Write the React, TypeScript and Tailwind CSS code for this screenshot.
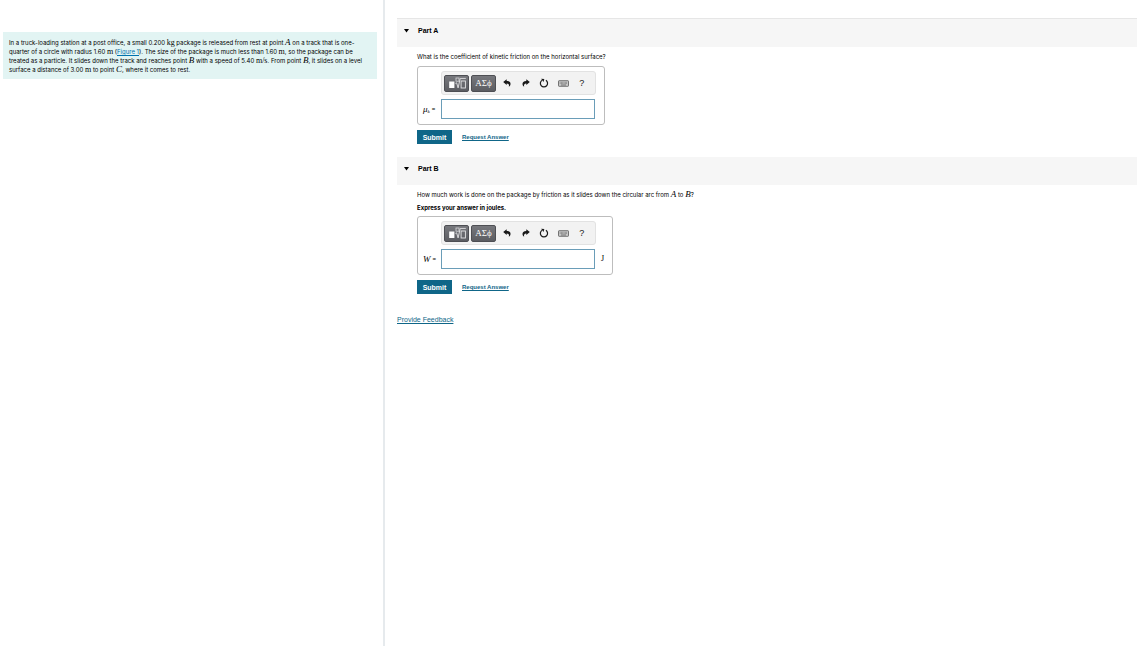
import { useState } from "react";
import type { ReactNode } from "react";

const iconButton = "flex-1 h-full flex items-center justify-center cursor-pointer";
const darkButton =
  "w-[25px] h-[17px] flex items-center justify-center rounded-xs border border-[#4e4f54] bg-linear-to-b from-[#77787d] to-[#5c5d62] text-white cursor-pointer";
const bodyText = "font-[Inter,sans-serif] text-[6px] leading-[9px]";

function MathVar({ children }: { children: ReactNode }) {
  return (
    <i className="font-['Liberation_Serif',serif] text-[9px] leading-none">
      {children}
    </i>
  );
}

function Unit({ children }: { children: ReactNode }) {
  return (
    <span className="font-['Liberation_Serif',serif] text-[8px] leading-none">
      {children}
    </span>
  );
}

function TemplatesIcon() {
  return (
    <svg width="19" height="13" viewBox="0 0 19 13" fill="none">
      <rect x="2.2" y="4.5" width="5.2" height="6.5" fill="white" />
      <rect x="9" y="1" width="3" height="3.2" stroke="#d8d8da" strokeWidth="0.8" />
      <path d="M8.4 6.4L9.6 5.8L11.1 10.9L13.2 1.4H18.8" stroke="#e4e4e6" strokeWidth="0.9" />
      <rect x="14.1" y="4" width="4.3" height="7" stroke="#e4e4e6" strokeWidth="0.9" />
    </svg>
  );
}

function UndoIcon({ flipped = false }: { flipped?: boolean }) {
  return (
    <svg
      width="8"
      height="8"
      viewBox="0 0 8 8"
      className={flipped ? "-scale-x-100" : ""}
    >
      <path
        d="M0.2 3.1L3.7 0.2V1.9C6.4 1.9 7.7 3.4 7.5 5.2C7.4 6.3 6.8 7.1 5.8 7.8C6.4 5.8 5.7 4.6 3.7 4.5V6.1Z"
        fill="#1a1a1a"
      />
    </svg>
  );
}

function ResetIcon() {
  return (
    <svg width="10" height="10" viewBox="0 0 10 10" fill="none">
      <path
        d="M6.9 2.3A3.6 3.6 0 1 1 3.2 2.2"
        stroke="#1a1a1a"
        strokeWidth="1.2"
      />
      <path d="M2.1 0.8L5.3 0.9L4.6 4Z" fill="#1a1a1a" />
    </svg>
  );
}

function KeyboardIcon() {
  return (
    <svg width="11" height="7" viewBox="0 0 11 7" fill="none">
      <rect x="0.5" y="0.7" width="10" height="5.6" rx="0.6" fill="#cccccc" stroke="#555555" strokeWidth="0.8" />
      <path d="M1.7 2.3H9.3M1.7 3.6H9.3" stroke="#666666" strokeWidth="0.7" strokeDasharray="0.9 0.4" />
      <path d="M3 5H8" stroke="#555555" strokeWidth="0.7" />
    </svg>
  );
}

function Toolbar() {
  return (
    <div className="h-6 w-[155px] flex items-center gap-0.5 pl-0.5 pr-1 rounded-[3px] border border-[#e2e2e2] bg-[#f2f2f2]">
      <button type="button" aria-label="Templates" className={darkButton}>
        <TemplatesIcon />
      </button>
      <button
        type="button"
        aria-label="Symbols"
        className={`${darkButton} font-['Liberation_Serif',serif] text-[9px] leading-none`}
      >
        ΑΣϕ
      </button>
      <div className="flex flex-1 h-full">
        <button type="button" aria-label="Undo" className={iconButton}>
          <UndoIcon />
        </button>
        <button type="button" aria-label="Redo" className={iconButton}>
          <UndoIcon flipped />
        </button>
        <button type="button" aria-label="Reset" className={iconButton}>
          <ResetIcon />
        </button>
        <button type="button" aria-label="Keyboard shortcuts" className={iconButton}>
          <KeyboardIcon />
        </button>
        <button
          type="button"
          aria-label="Help"
          className={`${iconButton} text-[9px] text-[#1a1a1a]`}
        >
          ?
        </button>
      </div>
    </div>
  );
}

type AnswerProps = {
  id: string;
  label: ReactNode;
  unit?: string;
};

function AnswerForm({ id, label, unit }: AnswerProps) {
  const [answer, setAnswer] = useState("");

  return (
    <form onSubmit={(e) => e.preventDefault()}>
      <div className="w-fit flex flex-col gap-1 border border-[#bdbdbd] rounded-[3px] pt-1 pb-[5px] pl-[5px] pr-2">
        <div className="pl-[18px]">
          <Toolbar />
        </div>
        <div className="flex items-center">
          <label
            htmlFor={id}
            className="w-[18px] flex items-center gap-0.5 whitespace-nowrap"
          >
            {label}
            <span>=</span>
          </label>
          <input
            id={id}
            type="text"
            value={answer}
            onChange={(e) => setAnswer(e.target.value)}
            className="w-[154px] h-5 border border-[#6a9db8] bg-white px-1 text-[8px] outline-none"
          />
          {unit && (
            <span className="pl-1.5 font-['Liberation_Serif',serif] text-[8px]">
              {unit}
            </span>
          )}
        </div>
      </div>
      <div className="flex items-center gap-2.5 mt-[5px]">
        <button
          type="submit"
          className="w-[35px] h-3.5 bg-[#0f6688] text-white text-[7px] leading-none font-bold cursor-pointer"
        >
          Submit
        </button>
        <a href="#" className="font-bold underline text-[#0f6688]">
          Request Answer
        </a>
      </div>
    </form>
  );
}

type PartProps = {
  title: string;
  className?: string;
  children: ReactNode;
};

function Part({ title, className = "", children }: PartProps) {
  const [isOpen, setIsOpen] = useState(true);

  return (
    <section className={className}>
      <h2 className="h-7 bg-[#f6f6f6] pl-[7px] pt-2">
        <button
          type="button"
          aria-expanded={isOpen}
          onClick={() => setIsOpen(!isOpen)}
          className="flex items-center gap-[9px] text-[7px] leading-2 font-bold cursor-pointer"
        >
          <svg width="5" height="4" viewBox="0 0 5 4">
            <path d="M0 0H5L2.5 3.4Z" fill="black" />
          </svg>
          {title}
        </button>
      </h2>
      {isOpen && <div className="pl-5 pt-[5px]">{children}</div>}
    </section>
  );
}

function App() {
  return (
    <div className="min-h-screen grid grid-cols-[385fr_752fr] bg-white font-['Liberation_Sans',Arial,sans-serif] text-[6px] leading-2 text-black">
      <aside className="border-r-2 border-[#e6eaed] pt-8 pl-[3px] pr-1.5">
        <p className={`${bodyText} bg-[#e2f4f3] pl-1.5 pr-1 pt-1.5 pb-[5px]`}>
          In a truck-loading station at a post office, a small 0.200{" "}
          <Unit>kg</Unit> package is released from rest at point{" "}
          <MathVar>A</MathVar> on a track that is one-quarter of a circle with
          radius 1.60 <Unit>m</Unit> (
          <a href="#" className="underline text-[#0072ad]">
            Figure 1
          </a>
          ). The size of the package is much less than 1.60 <Unit>m</Unit>, so
          the package can be treated as a particle. It slides down the track and
          reaches point <MathVar>B</MathVar> with a speed of 5.40{" "}
          <Unit>m/s</Unit>. From point <MathVar>B</MathVar>, it slides on a
          level surface a distance of 3.00 <Unit>m</Unit> to point{" "}
          <MathVar>C</MathVar>, where it comes to rest.
        </p>
      </aside>
      <main className="pt-[18px] pl-3">
        <Part title="Part A" className="border-t border-[#e6e6e6]">
          <p className={`${bodyText} mb-[5px]`}>
            What is the coefficient of kinetic friction on the horizontal
            surface?
          </p>
          <AnswerForm
            id="friction"
            label={
              <MathVar>
                μ<sub className="text-[5px]">k</sub>
              </MathVar>
            }
          />
        </Part>
        <Part title="Part B" className="mt-[13px]">
          <p className={`${bodyText} mb-1`}>
            How much work is done on the package by friction as it slides down
            the circular arc from <MathVar>A</MathVar> to <MathVar>B</MathVar>?
          </p>
          <p className={`${bodyText} mb-1 font-bold`}>
            Express your answer in joules.
          </p>
          <AnswerForm id="work" label={<MathVar>W</MathVar>} unit="J" />
        </Part>
        <a
          href="#"
          className="inline-block mt-[22px] text-[7px] underline text-[#0f6688]"
        >
          Provide Feedback
        </a>
      </main>
    </div>
  );
}

export default App;
